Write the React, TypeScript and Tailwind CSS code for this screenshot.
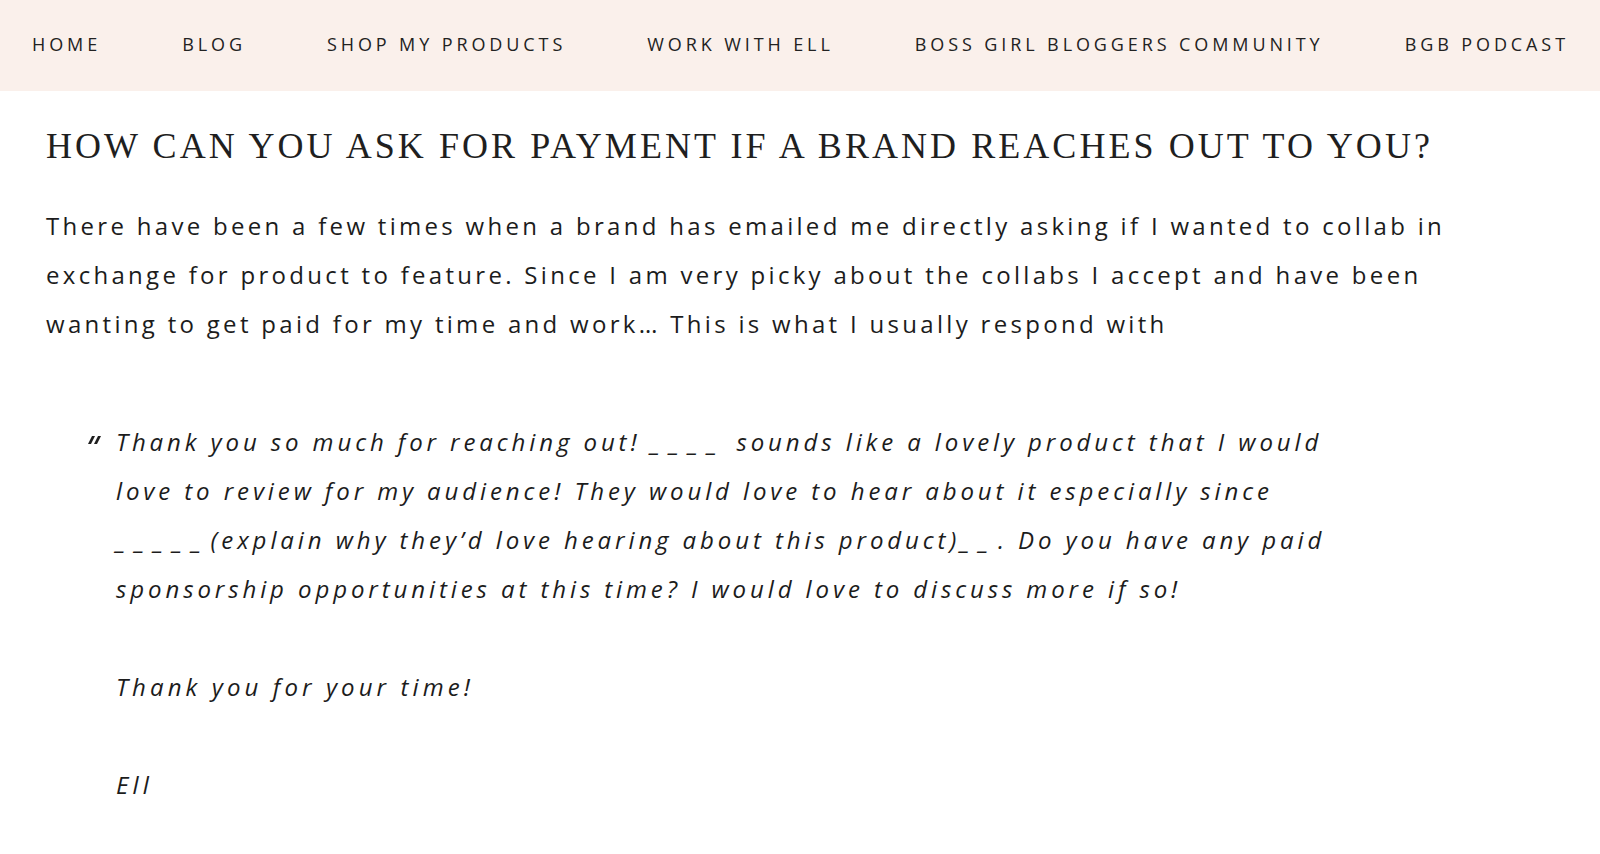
import React from "react";

const navItems = [
  "HOME",
  "BLOG",
  "SHOP MY PRODUCTS",
  "WORK WITH ELL",
  "BOSS GIRL BLOGGERS COMMUNITY",
  "BGB PODCAST",
];

const introLines = [
  "There have been a few times when a brand has emailed me directly asking if I wanted to collab in",
  "exchange for product to feature. Since I am very picky about the collabs I accept and have been",
  "wanting to get paid for my time and work\u2026 This is what I usually respond with",
];

const quoteLines = [
  "Thank you so much for reaching out! ____ sounds like a lovely product that I would",
  "love to review for my audience! They would love to hear about it especially since",
  "_____(explain why they\u2019d love hearing about this product)__. Do you have any paid",
  "sponsorship opportunities at this time? I would love to discuss more if so!",
];

// blanks in the template get wider spacing so they read as separate dashes
function Blanks({ text }: { text: string }) {
  const parts = text.split(/(_+)/);
  return (
    <>
      {parts.map((part, i) =>
        part.startsWith("_") ? (
          <span key={i} className="tracking-[9.5px]">
            {part}
          </span>
        ) : (
          <React.Fragment key={i}>{part}</React.Fragment>
        )
      )}
    </>
  );
}

function QuoteMark() {
  return (
    <svg width="14" height="10" viewBox="0 0 14 10" className="absolute left-[-28px] top-[19px]">
      <polygon points="4,0 7,0 3,8 0,8" fill="#1f1f1f" />
      <polygon points="10,0 13,0 9,8 6,8" fill="#1f1f1f" />
    </svg>
  );
}

export default function App() {
  return (
    <div className="min-h-[854px] bg-white text-[#1c1c1c] font-['Open_Sans',sans-serif]">
      <nav className="h-[91px] bg-[#faf0eb] flex items-center justify-between pl-[32px] pr-[31px] pb-[4px]">
        {navItems.map((item) => (
          <a
            key={item}
            href="#"
            className="text-[18px] tracking-[3.9px] text-[#222] whitespace-nowrap leading-none"
          >
            {item}
          </a>
        ))}
      </nav>

      <main className="pl-[46px] pt-[31px]">
        <h2 className="font-['Liberation_Serif',serif] text-[36px] leading-[48px] tracking-[0.085em] text-[#1f1f1f] whitespace-nowrap">
          HOW CAN YOU ASK FOR PAYMENT IF A BRAND REACHES OUT TO YOU?
        </h2>

        <div className="mt-[31px] text-[24px] leading-[49px] tracking-[3.3px]">
          {introLines.map((line) => (
            <p key={line} className="whitespace-nowrap">
              {line}
            </p>
          ))}
        </div>

        <blockquote className="relative ml-[70px] mt-[69px] italic text-[24px] leading-[49px] tracking-[3.9px]">
          <QuoteMark />
          {quoteLines.map((line) => (
            <p key={line} className="whitespace-nowrap">
              <Blanks text={line} />
            </p>
          ))}
          <p className="mt-[49px] tracking-[4.1px]">Thank you for your time!</p>
          <p className="mt-[49px] tracking-[4.1px]">Ell</p>
        </blockquote>
      </main>
    </div>
  );
}
